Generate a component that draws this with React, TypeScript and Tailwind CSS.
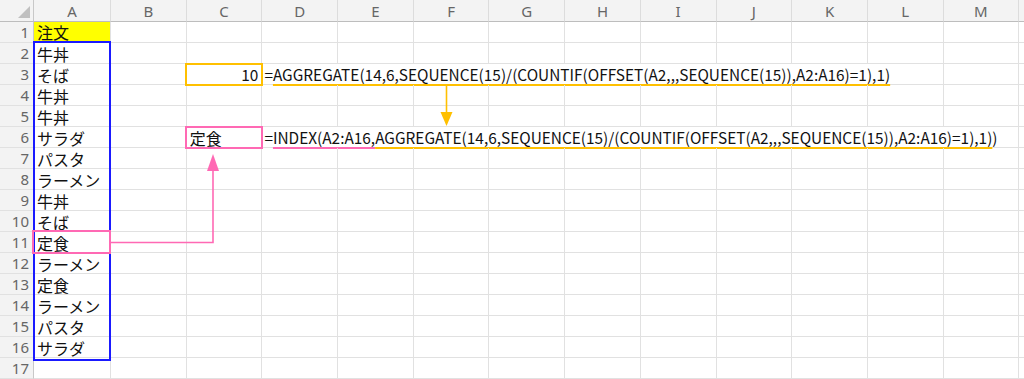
const COLS = ['A', 'B', 'C', 'D', 'E', 'F', 'G', 'H', 'I', 'J', 'K', 'L', 'M', '']
const ORDERS = ['牛丼', 'そば', '牛丼', '牛丼', 'サラダ', 'パスタ', 'ラーメン', '牛丼', 'そば', '定食', 'ラーメン', '定食', 'ラーメン', 'パスタ', 'サラダ']

const cell = 'border-r border-b border-[#e1e1e1] flex items-end px-[3px] whitespace-nowrap overflow-visible'
const cjk = { fontFamily: '"Noto Sans CJK JP", "Noto Sans", sans-serif' }

function Empty() {
  return <div className={cell} />
}

function RowHead({ n }: { n: number }) {
  return (
    <div className="border-r border-b border-r-[#c8c8c8] border-b-[#e1e1e1] bg-[#f3f3f3] flex items-center justify-end pr-[4px] text-[15px] text-[#666] font-['Noto_Sans',sans-serif]">
      {n}
    </div>
  )
}

function Arrows() {
  return (
    <svg className="absolute inset-0 pointer-events-none" width="1024" height="379">
      <line x1="446.5" y1="86" x2="446.5" y2="113" stroke="#ffc000" strokeWidth="1.6" />
      <polygon points="440.5,112 452.5,112 446.5,126" fill="#ffc000" />
      <polyline points="111,242.5 213,242.5 213,170" fill="none" stroke="#ff69b4" strokeWidth="1.6" />
      <polygon points="207,171 219,171 213,154" fill="#ff69b4" />
    </svg>
  )
}

export default function App() {
  const rows = []
  for (let r = 1; r <= 17; r++) {
    const cells = [<RowHead key="h" n={r} />]
    if (r === 1) {
      cells.push(<div key="a" className={`${cell} bg-[#ffff00]`}>注文</div>)
    } else if (r <= 16) {
      cells.push(<div key="a" className={`${cell} leading-[18px]`}>{ORDERS[r - 2]}</div>)
    } else {
      cells.push(<Empty key="a" />)
    }
    cells.push(<Empty key="b" />)
    if (r === 3) {
      cells.push(<div key="c" className={`${cell} justify-end text-[15.4px]`}>10</div>)
      cells.push(
        <div key="d" className={`${cell} col-span-9 pl-[2px] text-[15.4px]`}>
          =<span className="underline decoration-[#ffc000] decoration-2 underline-offset-[3px]">AGGREGATE(14,6,SEQUENCE(15)/(COUNTIF(OFFSET(A2,,,SEQUENCE(15)),A2:A16)=1),1)</span>
        </div>
      )
      cells.push(<Empty key="m" />, <Empty key="n" />)
    } else if (r === 6) {
      cells.push(<div key="c" className={`${cell} leading-[18px]`}>定食</div>)
      cells.push(
        <div key="d" className={`${cell} col-span-10 pl-[2px] text-[15.4px]`}>
          =<span className="underline decoration-[#ff69b4] decoration-2 underline-offset-[3px]">INDEX(A2:A16,</span>
          <span className="underline decoration-[#ffc000] decoration-2 underline-offset-[3px]">AGGREGATE(14,6,SEQUENCE(15)/(COUNTIF(OFFSET(A2,,,SEQUENCE(15)),A2:A16)=1),1)</span>)
        </div>
      )
      cells.push(<Empty key="n" />)
    } else {
      for (let c = 2; c < 14; c++) cells.push(<Empty key={c} />)
    }
    rows.push(...cells)
  }

  return (
    <div className="relative w-[1024px] h-[379px] overflow-hidden bg-white text-[16px] text-[#111] leading-[20px]" style={cjk}>
      <div className="grid grid-cols-[34px_77px_repeat(12,75.7px)_1fr] grid-rows-[22px_repeat(17,21px)]">
        <div className="relative border-r border-b border-r-[#c8c8c8] border-b-[#bdbdbd] bg-[#f3f3f3]">
          <svg className="absolute right-[3px] bottom-[3px]" width="12" height="12">
            <polygon points="12,0 12,12 0,12" fill="#c0c0c0" />
          </svg>
        </div>
        {COLS.map(c => (
          <div key={c || 'x'} className="border-r border-b border-r-[#dcdcdc] border-b-[#bdbdbd] bg-[#f3f3f3] flex items-center justify-center text-[15px] text-[#666] font-['Noto_Sans',sans-serif]">
            {c}
          </div>
        ))}
        {rows}
      </div>

      {/* annotation boxes */}
      <div className="absolute left-[33px] top-[41px] w-[78px] h-[320px] border-2 border-[#1a1aff] pointer-events-none" />
      <div className="absolute left-[32px] top-[230px] w-[79px] h-[24px] border-2 border-[#ff69b4] pointer-events-none" />
      <div className="absolute left-[185px] top-[63px] w-[78px] h-[23px] border-2 border-[#ffc000] pointer-events-none" />
      <div className="absolute left-[185px] top-[126px] w-[78px] h-[23px] border-2 border-[#ff69b4] pointer-events-none" />
      <Arrows />
    </div>
  )
}
